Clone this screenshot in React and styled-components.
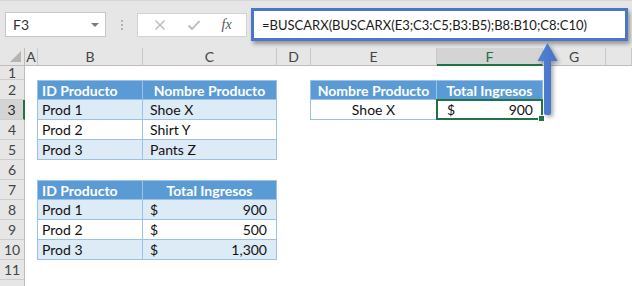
import React from 'react'
import styled, { createGlobalStyle, css } from 'styled-components'

const Global = createGlobalStyle`
    html, body {
        margin: 0;
        padding: 0;
        background: #ffffff;
        overflow: hidden;
    }
`

const FONT = `"Lato", "Liberation Sans", sans-serif`
const GREEN = '#217346'
const BLUE_LINE = '#9bc2e6'

const Window = styled.div`
    position: relative;
    width: 632px;
    height: 286px;
    overflow: hidden;
    background: #ffffff;
    font-family: ${FONT};
`

const Toolbar = styled.div`
    height: 48px;
    display: flex;
    align-items: center;
    padding: 0 4px 0 5px;
    box-sizing: border-box;
    background: #e6e6e6;
    border-top: 1px solid #d6d6d6;
`

const NameBox = styled.div`
    width: 101px;
    height: 25px;
    box-sizing: border-box;
    display: flex;
    align-items: center;
    justify-content: space-between;
    padding: 0 6px 0 7px;
    background: #ffffff;
    border: 1px solid #c6c6c6;
    font-size: 14px;
    color: #333333;

    &::after {
        content: '';
        border-left: 4px solid transparent;
        border-right: 4px solid transparent;
        border-top: 4px solid #7a7a7a;
    }
`

const Grip = styled.div`
    width: 31px;
    display: flex;
    flex-direction: column;
    align-items: center;
    gap: 2px;

    & span {
        width: 2px;
        height: 2px;
        background: #b3b3b3;
    }
`

const Buttons = styled.div`
    width: 110px;
    height: 24px;
    box-sizing: border-box;
    display: flex;
    align-items: center;
    justify-content: space-around;
    padding: 0 4px 0 6px;
    background: #ffffff;
    border: 1px solid #d2d2d2;
    margin-right: 4px;
`

const Fx = styled.span`
    font-family: "Liberation Serif", serif;
    font-style: italic;
    font-size: 14px;
    color: #555555;
`

const Formula = styled.div`
    flex: 1;
    height: 33px;
    box-sizing: border-box;
    display: flex;
    align-items: center;
    padding-left: 8px;
    background: #ffffff;
    border: 3px solid #4a76c8;
    box-shadow: 2px 3px 4px rgba(0, 0, 0, 0.35);
    font-size: 13px;
    color: #1a1a1a;
    white-space: nowrap;
`

const Sheet = styled.div`
    display: grid;
    grid-template-columns: 25px 13px 105px 134px 34px 126px 106px 63px 1fr;
    grid-template-rows: 18px 14px repeat(11, 20px);
    background: #ffffff;
`

const headerBase = css`
    box-sizing: border-box;
    display: flex;
    align-items: center;
    justify-content: center;
    background: #e6e6e6;
    font-size: 14px;
    color: #444444;
`

const Corner = styled.div`
    ${headerBase};
    position: relative;
    border-right: 1px solid #bdbdbd;
    border-bottom: 1px solid #bdbdbd;

    &::after {
        content: '';
        position: absolute;
        right: 3px;
        bottom: 3px;
        border-left: 11px solid transparent;
        border-bottom: 11px solid #b4b4b4;
    }
`

const ColHead = styled.div`
    ${headerBase};
    border-right: 1px solid #c8c8c8;
    border-bottom: ${p => (p.$active ? `2px solid ${GREEN}` : '1px solid #bdbdbd')};
    background: ${p => (p.$active ? '#d4d4d4' : '#e6e6e6')};
    color: ${p => (p.$active ? GREEN : '#444444')};
`

const RowHead = styled.div`
    ${headerBase};
    border-bottom: 1px solid #cdcdcd;
    border-right: ${p => (p.$active ? `2px solid ${GREEN}` : '1px solid #bdbdbd')};
    background: ${p => (p.$active ? '#d4d4d4' : '#e6e6e6')};
    color: ${p => (p.$active ? '#2b2b2b' : '#444444')};
`

const Blank = styled.div``

const Cell = styled.div`
    position: relative;
    box-sizing: border-box;
    display: flex;
    align-items: center;
    justify-content: ${p => p.$align || 'flex-start'};
    padding: 0 ${p => p.$pr || 4}px 0 ${p => p.$pl || 4}px;
    font-size: 14px;
    white-space: nowrap;
    color: ${p => (p.$kind === 'head' ? '#ffffff' : '#111111')};
    font-weight: ${p => (p.$kind === 'head' ? 700 : 400)};
    background: ${p => (p.$kind === 'head' ? '#5b9bd5' : p.$kind === 'band' ? '#ddebf7' : '#ffffff')};
    border-right: 1px solid ${BLUE_LINE};
    border-bottom: 1px solid ${BLUE_LINE};
    border-left: ${p => (p.$first ? `1px solid ${BLUE_LINE}` : 'none')};
    border-top: ${p => (p.$top ? `1px solid ${BLUE_LINE}` : 'none')};
    margin-left: ${p => (p.$first ? '-1px' : '0')};
`

const Money = styled(Cell)`
    justify-content: space-between;
`

const Selection = styled.div`
    position: absolute;
    left: -1px;
    top: -1px;
    right: -1px;
    bottom: -1px;
    border: 2px solid ${GREEN};

    &::after {
        content: '';
        position: absolute;
        right: -4px;
        bottom: -4px;
        width: 5px;
        height: 5px;
        background: ${GREEN};
        border: 1px solid #ffffff;
    }
`

const Arrow = styled.svg`
    position: absolute;
    left: 534px;
    top: 40px;
    filter: drop-shadow(2px 2px 2px rgba(0, 0, 0, 0.35));
`

const COLS = ['A', 'B', 'C', 'D', 'E', 'F', 'G', 'H']

const lookup = [
    { r: 3, id: 'Prod 1', name: 'Shoe X', kind: 'band' },
    { r: 4, id: 'Prod 2', name: 'Shirt Y', kind: 'plain' },
    { r: 5, id: 'Prod 3', name: 'Pants Z', kind: 'band' },
]

const totals = [
    { r: 8, id: 'Prod 1', total: '900', kind: 'band' },
    { r: 9, id: 'Prod 2', total: '500', kind: 'plain' },
    { r: 10, id: 'Prod 3', total: '1,300', kind: 'band' },
]

function cellFor(r, col) {
    const key = `${col}${r}`

    if (r === 2 || r === 7) {
        if (col === 'B') return <Cell key={key} $kind="head" $first $top>ID Producto</Cell>
        if (col === 'C') return <Cell key={key} $kind="head" $top $align="center">{r === 2 ? 'Nombre Producto' : 'Total Ingresos'}</Cell>
    }
    if (r === 2) {
        if (col === 'E') return <Cell key={key} $kind="head" $first $top $align="center">Nombre Producto</Cell>
        if (col === 'F') return <Cell key={key} $kind="head" $top $align="center">Total Ingresos</Cell>
    }
    if (r === 3) {
        if (col === 'E') return <Cell key={key} $kind="plain" $first $align="center">Shoe X</Cell>
        if (col === 'F') {
            return (
                <Money key={key} $kind="plain" $pl={10} $pr={9}>
                    <span>$</span>
                    <span>900</span>
                    <Selection />
                </Money>
            )
        }
    }

    const a = lookup.find(x => x.r === r)
    if (a) {
        if (col === 'B') return <Cell key={key} $kind={a.kind} $first>{a.id}</Cell>
        if (col === 'C') return <Cell key={key} $kind={a.kind} $pl={7}>{a.name}</Cell>
    }

    const t = totals.find(x => x.r === r)
    if (t) {
        if (col === 'B') return <Cell key={key} $kind={t.kind} $first>{t.id}</Cell>
        if (col === 'C') {
            return (
                <Money key={key} $kind={t.kind} $pl={7} $pr={9}>
                    <span>$</span>
                    <span>{t.total}</span>
                </Money>
            )
        }
    }

    return <Blank key={key} />
}

export default function App() {
    const rows = Array.from({ length: 12 }, (_, i) => i + 1)

    return (
        <Window>
            <Global />
            <Toolbar>
                <NameBox>F3</NameBox>
                <Grip><span /><span /><span /></Grip>
                <Buttons>
                    <svg width="12" height="12" viewBox="0 0 12 12">
                        <path d="M1.5 1.5 L10.5 10.5 M10.5 1.5 L1.5 10.5" stroke="#b8b8b8" strokeWidth="1.4" fill="none" />
                    </svg>
                    <svg width="14" height="12" viewBox="0 0 14 12">
                        <path d="M1.5 6.5 L5 10 L12.5 2" stroke="#b8b8b8" strokeWidth="1.8" fill="none" />
                    </svg>
                    <Fx>fx</Fx>
                </Buttons>
                <Formula>=BUSCARX(BUSCARX(E3;C3:C5;B3:B5);B8:B10;C8:C10)</Formula>
            </Toolbar>

            <Sheet>
                <Corner />
                {COLS.map(c => (
                    <ColHead key={c} $active={c === 'F'}>{c === 'H' ? '' : c}</ColHead>
                ))}
                {rows.map(r => (
                    <React.Fragment key={r}>
                        {/* row 12 sits below the visible edge; only its top strip shows */}
                        <RowHead $active={r === 3}>{r < 12 ? r : ''}</RowHead>
                        {COLS.map(c => cellFor(r, c))}
                    </React.Fragment>
                ))}
            </Sheet>

            <Arrow width="28" height="80" viewBox="0 0 28 80">
                <defs>
                    <linearGradient id="arrowFill" x1="0" x2="1" y1="0" y2="0">
                        <stop offset="0" stopColor="#4f82d6" />
                        <stop offset="1" stopColor="#4673c4" />
                    </linearGradient>
                </defs>
                <path
                    d="M13.5 3 L23.5 21 L17 21 L17 73 Q17 75 15 75 L12 75 Q10 75 10 73 L10 21 L3.5 21 Z"
                    fill="url(#arrowFill)"
                />
            </Arrow>
        </Window>
    )
}
